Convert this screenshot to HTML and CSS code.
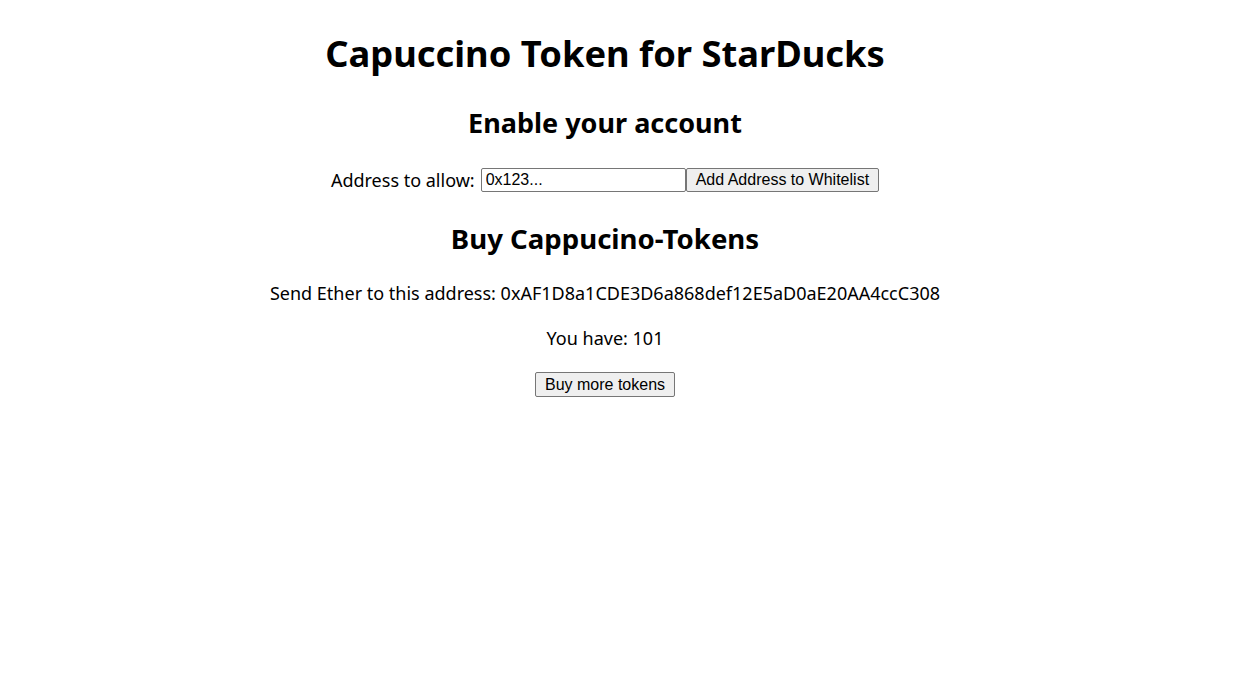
FILE: index.html
```html
<!DOCTYPE html>
<html>
<head>
<meta charset="utf-8">
<title>Capuccino Token for StarDucks</title>
<link rel="stylesheet" href="styles.css">
</head>
<body>
<div class="app">
  <h1 class="title">Capuccino Token for StarDucks</h1>
  <h2 class="subtitle enable">Enable your account</h2>
  <div class="row"><span class="label">Address to allow:</span><input class="field" type="text" name="kycAddress" value="0x123..."><button class="btn" type="button">Add Address to Whitelist</button></div>
  <h2 class="subtitle buy">Buy Cappucino-Tokens</h2>
  <p class="line addr">Send Ether to this address: 0xAF1D8a1CDE3D6a868def12E5aD0aE20AA4ccC308</p>
  <p class="line have">You have: 101</p>
  <div class="actions"><button class="btn btn-buy" type="button">Buy more tokens</button></div>
</div>
</body>
</html>
```

FILE: styles.css
```css
html, body {
  background: #ffffff;
}
body {
  margin: 8px;
  font-family: "Noto Sans", "Open Sans", sans-serif;
  font-size: 18px;
  color: #000000;
}
.app {
  display: flow-root;
  width: 1194px;
  text-align: center;
}
.title {
  font-size: 36.3px;
  line-height: 50px;
  font-weight: 700;
  margin: 20px 0 27px;
}
.subtitle {
  font-size: 27px;
  line-height: 36px;
  font-weight: 700;
  margin: 0;
}
.buy {
  font-size: 27.6px;
}
.row {
  display: flex;
  justify-content: center;
  align-items: center;
  height: 26px;
  margin: 26px 0 27px;
  line-height: 26px;
}
.label {
  margin-right: 6px;
}
.field {
  font-family: "Liberation Sans", Arial, sans-serif;
  font-size: 16px;
  width: 205px;
  height: 24px;
  box-sizing: border-box;
  padding: 1px 4px;
  border: 1px solid #767676;
  border-radius: 2px;
  margin: 0;
  color: #000;
  background: #fff;
}
.btn {
  font-family: "Liberation Sans", Arial, sans-serif;
  font-size: 16px;
  line-height: 18px;
  height: 24px;
  box-sizing: border-box;
  padding: 0 9px;
  border: 1px solid #767676;
  border-radius: 2px;
  background: #efefef;
  color: #000;
  margin: 0;
}
.btn-buy {
  height: 25px;
}
.line {
  line-height: 26px;
  margin: 0;
}
.addr {
  margin-top: 24px;
}
.have {
  margin-top: 19px;
}
.actions {
  display: flex;
  justify-content: center;
  margin-top: 21px;
}
```
